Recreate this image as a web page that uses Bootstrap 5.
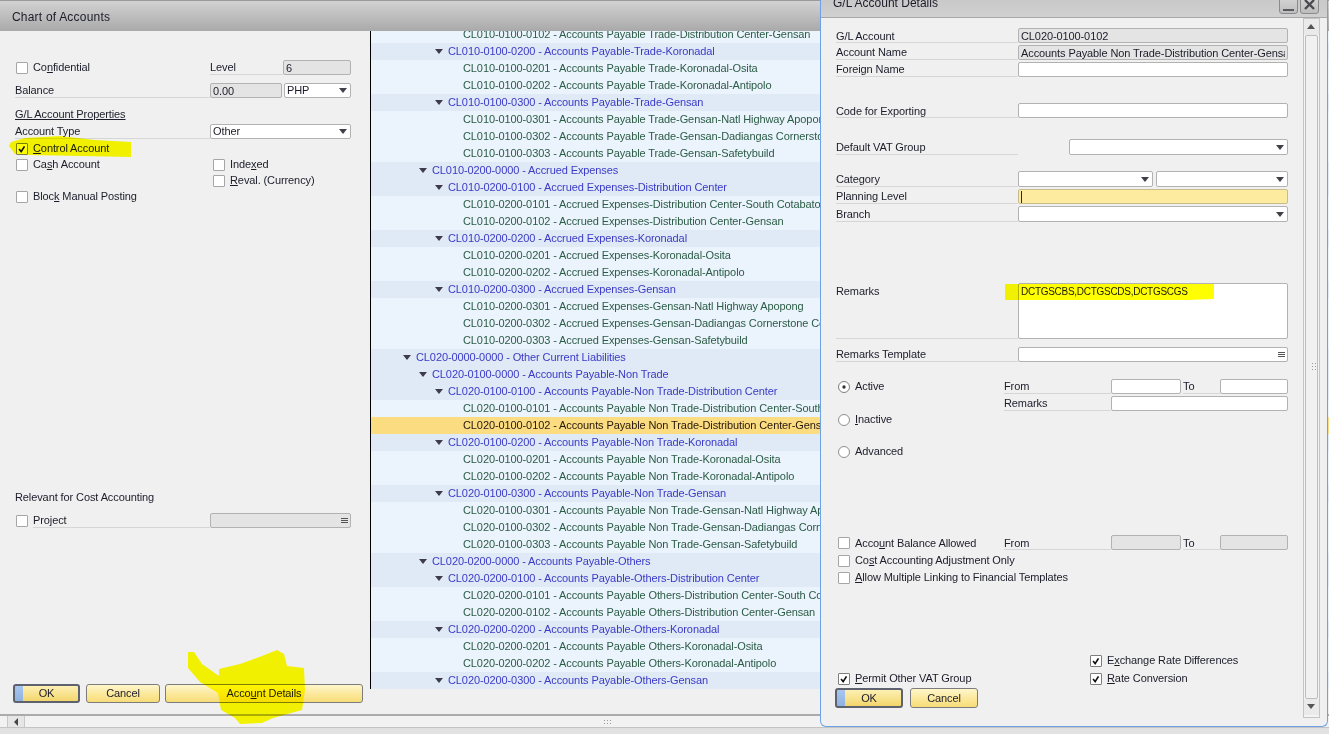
<!DOCTYPE html>
<html lang="en">
<head>
    <title>Chart of Accounts</title>
    <meta charset="UTF-8">
    <meta name="viewport" content="width=device-width, initial-scale=1.0">
    <link href="https://cdn.jsdelivr.net/npm/bootstrap@5.3.3/dist/css/bootstrap.min.css" rel="stylesheet">
    <style>
        html, body { height: 734px; overflow: hidden; }
        body { background: #e2e2e2; font: 11px/15px "Liberation Sans", Arial, sans-serif; letter-spacing: -0.1px; color: #1c1c2a; }

        /* windows */
        .win-back { position: absolute; left: 0; top: 0; width: 1329px; height: 728px; background: #f0f0f0; }
        .win-front { position: absolute; left: 820px; top: -12px; width: 508px; height: 739px; background: #f0f0f0; border: 1px solid #6ea2e6; border-top: 0; border-radius: 0 0 6px 6px; }
        .title-back { height: 31px; padding: 2px 0 0 12px; font-size: 12px; letter-spacing: 0.2px; background: linear-gradient(#d2d2d2, #a9a9a9); border-top: 1px solid #9a9a9a; }
        .title-front { height: 30px; padding: 2px 0 0 12px; font-size: 12px; letter-spacing: 0; background: linear-gradient(#c4c4c4, #d0d0d0); border-bottom: 1px solid #a8a8a8; }
        .win-btn { width: 19px; height: 22px; margin-top: -1px; border: 1px solid #8b8b8b; border-radius: 3px; background: linear-gradient(#dcdcdc, #bdbdbd); }
        .win-btn svg { display: block; }
        .win-btn-min { margin-right: 2px; }
        .win-btn-close { margin-right: 8px; }

        /* left pane */
        .pane-left { width: 370px; height: 683px; padding: 29px 0 0 15px; flex: none; }
        .form-line { display: flex; align-items: center; height: 15px; }
        .form-line-16 { height: 16px; }
        .form-line-16 .lbl { height: 16px; padding-top: 1px; }
        .lbl { height: 15px; border-bottom: 1px solid #d6d6d6; white-space: nowrap; }
        .lbl-low { padding-top: 1px; }
        .w-73 { width: 73px; flex: none; } .w-195 { width: 195px; flex: none; } .w-182 { width: 182px; flex: none; } .w-107 { width: 107px; flex: none; }
        .w-37 { width: 37px; margin-left: 2px; flex: none; }
        .spacer-195 { width: 195px; flex: none; } .spacer-197 { width: 197px; flex: none; } .spacer-168 { width: 168px; flex: none; } .spacer-252 { width: 252px; flex: none; }
        .chk-text { margin-left: 5px; white-space: nowrap; }

        /* SBO controls */
        .sbo .form-control, .sbo .form-select { height: 15px; min-height: 0; padding: 0 2px; font-size: 11px; line-height: 13px; letter-spacing: -0.1px; color: #1c1c2a; border: 1px solid #b2b2b2; border-radius: 2px; box-shadow: none; font-family: inherit; }
        .sbo .form-line-16 .form-select { height: 16px; }
        .sbo .form-select { background-color: #fff; background-position: right 3px center; background-size: 8px 5px; background-image: url("data:image/svg+xml,%3csvg xmlns='http://www.w3.org/2000/svg' viewBox='0 0 8 5'%3e%3cpath fill='%23404048' d='M0 0h8L4 5z'/%3e%3c/svg%3e"); }
        .sbo .form-control:disabled, .sbo .form-control[readonly] { background: #e4e4e4; }
        .sbo textarea.form-control { height: 56px; padding: 1px 2px; resize: none; font-size: 10px; letter-spacing: -0.28px; }
        .sbo .form-check-input { width: 12px; height: 12px; margin: 0 0 0 1px; flex: none; border: 1px solid #a6a6a6; border-radius: 1px; background-color: #fff; box-shadow: none; float: none; }
        .sbo .pane-right .form-check-input { margin-left: 2px; }
        .sbo .form-check-input[type=radio] { border-radius: 50%; border-color: #8f8f8f; }
        .sbo .form-check-input:checked { background-color: #fff; border-color: #7e7e7e; }
        .sbo .form-check-input:checked[type=checkbox] { --bs-form-check-bg-image: url("data:image/svg+xml,%3csvg xmlns='http://www.w3.org/2000/svg' viewBox='0 0 12 12'%3e%3cpath fill='none' stroke='%23101010' stroke-width='2' d='M2.5 6l2.5 3.2 4-6.4'/%3e%3c/svg%3e"); }
        .sbo .form-check-input:checked[type=radio] { --bs-form-check-bg-image: url("data:image/svg+xml,%3csvg xmlns='http://www.w3.org/2000/svg' viewBox='0 0 12 12'%3e%3ccircle cx='6' cy='6' r='2' fill='%23303038'/%3e%3c/svg%3e"); }
        .input-level { width: 68px; flex: none; } .input-bal { width: 72px; flex: none; } .input-cur { width: 67px; flex: none; margin-left: 2px; }
        .input-type { width: 141px; flex: none; } .input-proj { width: 141px; height: 15px; flex: none; }
        .input-main { width: 270px; flex: none; } .input-vat { width: 219px; margin-left: 51px; flex: none; }
        .input-cat1 { width: 135px; flex: none; } .input-cat2 { width: 132px; margin-left: 3px; flex: none; }
        .input-from { width: 70px; flex: none; } .input-to { width: 68px; flex: none; } .input-rem { width: 177px; flex: none; }
        .sbo .input-focus { background: linear-gradient(#14246a, #14246a) 2px 1px / 1px 12px no-repeat, #fdeba0; border-color: #c9bc8c; }
        .with-list { position: relative; }
        .list-mark { position: absolute; right: 3px; top: 5px; width: 7px; height: 5px; border-top: 1px solid #555; border-bottom: 1px solid #555; }
        .list-mark::after { content: ""; display: block; margin-top: 1px; border-top: 1px solid #555; }

        /* buttons */
        .sbo-btn { height: 19px; padding: 0; font-size: 11px; line-height: 15px; letter-spacing: -0.1px; color: #1c1c2a; border: 1px solid #7c7c7c; border-radius: 3px; background: linear-gradient(#fff6cc, #fbe899 55%, #f7dc78); }
        .sbo-btn-ok { border: 2px solid #5d626e; background: linear-gradient(#a8c6ee, #8fb2e2) 0 0 / 8px 100% no-repeat, linear-gradient(#fdf0b4, #f3d66c); }
        .btn-row-left { margin-left: -2px; }
        .btn-ok-l { width: 67px; } .btn-cancel-l { width: 74px; margin-left: 6px; } .btn-details { width: 198px; margin-left: 5px; }
        .btn-ok-r { width: 68px; height: 20px; margin-left: -1px; } .btn-cancel-r { width: 68px; height: 20px; margin-left: 7px; }

        /* tree */
        .tree-wrap { width: 959px; height: 658px; flex: none; overflow: hidden; border-left: 1px solid #000; }
        .tree-inner { margin-top: -5px; }
        .tree-line { height: 17px; line-height: 16px; white-space: nowrap; position: relative; }
        .tree-node { background: #e0eaf6; color: #3a3ac6; }
        .tree-leaf { background: #ebf3fc; color: #2c5c46; padding-left: 92px; }
        .tree-sel { background: #fbdc80; color: #26180c; }
        .lvl-1 { padding-left: 45px; } .lvl-2 { padding-left: 61px; } .lvl-3 { padding-left: 77px; }
        .tree-node::before { content: ""; position: absolute; top: 6px; border: 4px solid transparent; border-top: 5px solid #3c3c4a; border-bottom: 0; }
        .lvl-1::before { left: 32px; } .lvl-2::before { left: 48px; } .lvl-3::before { left: 64px; }

        /* scrollbars */
        .hbar { height: 14px; border-top: 2px solid #ababab; border-bottom: 1px solid #c4c4c4; position: relative; background: #f2f2f2; }
        .hbar-btn { position: absolute; left: 7px; top: 0; width: 18px; height: 11px; background: #e6e6e6; border-right: 1px solid #c8c8c8; border-left: 1px solid #c8c8c8; }
        .hbar-btn::after { content: ""; position: absolute; left: 6px; top: 2px; border: 4px solid transparent; border-right: 4px solid #444; border-left: 0; }
        .grip { position: absolute; width: 8px; height: 5px; background: radial-gradient(circle, #999 0.8px, transparent 1px) 0 0 / 3px 3px; }
        .grip-h { left: 603px; top: 3px; } .grip-v { left: 5px; top: 50%; margin-top: -5px; width: 6px; height: 9px; }
        .vbar { position: absolute; left: 482px; top: 30px; width: 17px; height: 700px; border: 1px solid #c4c4c4; background: #f4f4f4; }
        .vbar-up, .vbar-down { height: 16px; position: relative; background: #eaeaea; }
        .vbar-up::after, .vbar-down::after { content: ""; position: absolute; left: 3px; top: 5px; border: 4px solid transparent; }
        .vbar-up::after { border-bottom: 5px solid #555; border-top: 0; }
        .vbar-down::after { border-top: 5px solid #555; border-bottom: 0; }
        .vbar-thumb { height: 664px; position: relative; margin: 0 1px; border: 1px solid #bdbdbd; border-radius: 2px; background: #f1f1f1; }

        /* spacing of the form rows */
        .pane-right { padding: 10px 0 0 15px; }
        .gap-1x { margin-top: 1px; } .gap-2x { margin-top: 2px; } .gap-3x { margin-top: 3px; } .gap-8 { margin-top: 8px; } .gap-9 { margin-top: 9px; }
        .gap-16 { margin-top: 16px; } .gap-17 { margin-top: 17px; } .gap-21 { margin-top: 21px; } .gap-26 { margin-top: 26px; } .gap-61 { margin-top: 61px; }
        .gap-68 { margin-top: 68px; } .gap-76 { margin-top: 76px; } .gap-156 { margin-top: 156px; } .gap-286 { margin-top: 286px; }
        .line-tall { height: 56px; align-items: flex-start; }
        .line-tall .lbl { height: 56px; }
        .remarks-lbl-text { display: block; margin-top: 1px; }

        /* marker strokes on top of the screenshot */
        .marker { position: absolute; left: 0; top: 0; width: 1329px; height: 734px; pointer-events: none; mix-blend-mode: multiply; }
    </style>
</head>
<body class="sbo">
    <div class="win-back d-flex flex-column">
        <div class="title-back d-flex align-items-center">Chart of Accounts</div>
        <div class="d-flex">
            <div class="pane-left">
                <div class="form-line">
                    <span class="spacer-195 d-flex align-items-center"><input class="form-check-input" type="checkbox"><span class="chk-text">Co<u>n</u>fidential</span></span>
                    <span class="lbl w-73">Level</span>
                    <input class="form-control input-level" value="6" disabled>
                </div>
                <div class="form-line gap-8">
                    <span class="lbl w-195">Balance</span>
                    <input class="form-control input-bal" value="0.00" disabled>
                    <select class="form-select input-cur"><option>PHP</option></select>
                </div>
                <div class="form-line gap-9"><u>G/L Account Properties</u></div>
                <div class="form-line gap-2x">
                    <span class="lbl w-195">Account Type</span>
                    <select class="form-select input-type"><option>Other</option></select>
                </div>
                <div class="form-line gap-2x">
                    <input class="form-check-input" type="checkbox" checked><span class="chk-text"><u>C</u>ontrol Account</span>
                </div>
                <div class="form-line gap-1x">
                    <span class="spacer-197 d-flex align-items-center"><input class="form-check-input" type="checkbox"><span class="chk-text">Ca<u>s</u>h Account</span></span>
                    <input class="form-check-input" type="checkbox"><span class="chk-text">Inde<u>x</u>ed</span>
                </div>
                <div class="form-line gap-1x">
                    <span class="spacer-197"></span>
                    <input class="form-check-input" type="checkbox"><span class="chk-text"><u>R</u>eval. (Currency)</span>
                </div>
                <div class="form-line gap-1x">
                    <input class="form-check-input" type="checkbox"><span class="chk-text">Bloc<u>k</u> Manual Posting</span>
                </div>
                <div class="form-line gap-286">Relevant for Cost Accounting</div>
                <div class="form-line gap-8">
                    <span class="spacer-195 d-flex align-items-center"><input class="form-check-input" type="checkbox"><span class="chk-text lbl flex-grow-1">Pro<u>j</u>ect</span></span>
                    <span class="with-list input-proj"><input class="form-control" disabled><span class="list-mark"></span></span>
                </div>
                <div class="d-flex gap-156 btn-row-left">
                    <button class="btn sbo-btn sbo-btn-ok btn-ok-l">OK</button>
                    <button class="btn sbo-btn btn-cancel-l">Cancel</button>
                    <button class="btn sbo-btn btn-details">Acco<u>u</u>nt Details</button>
                </div>
            </div>
            <div class="tree-wrap">
                <div class="tree-inner">
                    <div class="tree-line tree-leaf">CL010-0100-0102 - Accounts Payable Trade-Distribution Center-Gensan</div>
                    <div class="tree-line tree-node lvl-3">CL010-0100-0200 - Accounts Payable-Trade-Koronadal</div>
                    <div class="tree-line tree-leaf">CL010-0100-0201 - Accounts Payable Trade-Koronadal-Osita</div>
                    <div class="tree-line tree-leaf">CL010-0100-0202 - Accounts Payable Trade-Koronadal-Antipolo</div>
                    <div class="tree-line tree-node lvl-3">CL010-0100-0300 - Accounts Payable-Trade-Gensan</div>
                    <div class="tree-line tree-leaf">CL010-0100-0301 - Accounts Payable Trade-Gensan-Natl Highway Apopong</div>
                    <div class="tree-line tree-leaf">CL010-0100-0302 - Accounts Payable Trade-Gensan-Dadiangas Cornerstone</div>
                    <div class="tree-line tree-leaf">CL010-0100-0303 - Accounts Payable Trade-Gensan-Safetybuild</div>
                    <div class="tree-line tree-node lvl-2">CL010-0200-0000 - Accrued Expenses</div>
                    <div class="tree-line tree-node lvl-3">CL010-0200-0100 - Accrued Expenses-Distribution Center</div>
                    <div class="tree-line tree-leaf">CL010-0200-0101 - Accrued Expenses-Distribution Center-South Cotabato</div>
                    <div class="tree-line tree-leaf">CL010-0200-0102 - Accrued Expenses-Distribution Center-Gensan</div>
                    <div class="tree-line tree-node lvl-3">CL010-0200-0200 - Accrued Expenses-Koronadal</div>
                    <div class="tree-line tree-leaf">CL010-0200-0201 - Accrued Expenses-Koronadal-Osita</div>
                    <div class="tree-line tree-leaf">CL010-0200-0202 - Accrued Expenses-Koronadal-Antipolo</div>
                    <div class="tree-line tree-node lvl-3">CL010-0200-0300 - Accrued Expenses-Gensan</div>
                    <div class="tree-line tree-leaf">CL010-0200-0301 - Accrued Expenses-Gensan-Natl Highway Apopong</div>
                    <div class="tree-line tree-leaf">CL010-0200-0302 - Accrued Expenses-Gensan-Dadiangas Cornerstone Center</div>
                    <div class="tree-line tree-leaf">CL010-0200-0303 - Accrued Expenses-Gensan-Safetybuild</div>
                    <div class="tree-line tree-node lvl-1">CL020-0000-0000 - Other Current Liabilities</div>
                    <div class="tree-line tree-node lvl-2">CL020-0100-0000 - Accounts Payable-Non Trade</div>
                    <div class="tree-line tree-node lvl-3">CL020-0100-0100 - Accounts Payable-Non Trade-Distribution Center</div>
                    <div class="tree-line tree-leaf">CL020-0100-0101 - Accounts Payable Non Trade-Distribution Center-South Cotabato</div>
                    <div class="tree-line tree-leaf tree-sel">CL020-0100-0102 - Accounts Payable Non Trade-Distribution Center-Gensan</div>
                    <div class="tree-line tree-node lvl-3">CL020-0100-0200 - Accounts Payable-Non Trade-Koronadal</div>
                    <div class="tree-line tree-leaf">CL020-0100-0201 - Accounts Payable Non Trade-Koronadal-Osita</div>
                    <div class="tree-line tree-leaf">CL020-0100-0202 - Accounts Payable Non Trade-Koronadal-Antipolo</div>
                    <div class="tree-line tree-node lvl-3">CL020-0100-0300 - Accounts Payable-Non Trade-Gensan</div>
                    <div class="tree-line tree-leaf">CL020-0100-0301 - Accounts Payable Non Trade-Gensan-Natl Highway Apopong</div>
                    <div class="tree-line tree-leaf">CL020-0100-0302 - Accounts Payable Non Trade-Gensan-Dadiangas Cornerstone</div>
                    <div class="tree-line tree-leaf">CL020-0100-0303 - Accounts Payable Non Trade-Gensan-Safetybuild</div>
                    <div class="tree-line tree-node lvl-2">CL020-0200-0000 - Accounts Payable-Others</div>
                    <div class="tree-line tree-node lvl-3">CL020-0200-0100 - Accounts Payable-Others-Distribution Center</div>
                    <div class="tree-line tree-leaf">CL020-0200-0101 - Accounts Payable Others-Distribution Center-South Cotabato</div>
                    <div class="tree-line tree-leaf">CL020-0200-0102 - Accounts Payable Others-Distribution Center-Gensan</div>
                    <div class="tree-line tree-node lvl-3">CL020-0200-0200 - Accounts Payable-Others-Koronadal</div>
                    <div class="tree-line tree-leaf">CL020-0200-0201 - Accounts Payable Others-Koronadal-Osita</div>
                    <div class="tree-line tree-leaf">CL020-0200-0202 - Accounts Payable Others-Koronadal-Antipolo</div>
                    <div class="tree-line tree-node lvl-3">CL020-0200-0300 - Accounts Payable-Others-Gensan</div>
                </div>
            </div>
        </div>
        <div class="hbar"><span class="hbar-btn"></span><span class="grip grip-h"></span></div>
    </div>

    <div class="win-front">
        <div class="title-front d-flex align-items-center">
            <span>G/L Account Details</span>
            <span class="win-btn win-btn-min ms-auto"><svg width="17" height="20" viewBox="0 0 17 20"><path fill="#5a5a5e" d="M3 16h11v2H3z"/></svg></span>
            <span class="win-btn win-btn-close"><svg width="17" height="20" viewBox="0 0 17 20"><path fill="none" stroke="#4a4a50" stroke-width="2.4" d="M4 7l9 9M13 7l-9 9"/></svg></span>
        </div>
        <div class="pane-right">
            <div class="form-line"><span class="lbl lbl-low w-182">G/L Account</span><input class="form-control input-main" value="CL020-0100-0102" readonly></div>
            <div class="form-line gap-2x"><span class="lbl w-182">Account Name</span><input class="form-control input-main" value="Accounts Payable Non Trade-Distribution Center-Gensan" readonly></div>
            <div class="form-line gap-2x"><span class="lbl w-182">Foreign Name</span><input class="form-control input-main"></div>
            <div class="form-line gap-26"><span class="lbl lbl-low w-182">Code for Exporting</span><input class="form-control input-main"></div>
            <div class="form-line form-line-16 gap-21"><span class="lbl w-182">Default VAT Group</span><select class="form-select input-vat"></select></div>
            <div class="form-line form-line-16 gap-16"><span class="lbl w-182">Category</span><select class="form-select input-cat1"></select><select class="form-select input-cat2"></select></div>
            <div class="form-line gap-2x"><span class="lbl w-182">Planning Level</span><input class="form-control input-main input-focus"></div>
            <div class="form-line form-line-16 gap-2x"><span class="lbl w-182">Branch</span><select class="form-select input-main"></select></div>
            <div class="form-line line-tall gap-61"><span class="lbl w-182"><span class="remarks-lbl-text">Remarks</span></span><textarea class="form-control input-main">DCTGSCBS,DCTGSCDS,DCTGSCGS</textarea></div>
            <div class="form-line gap-8"><span class="lbl w-182">Remarks Template</span><span class="with-list input-main"><input class="form-control"><span class="list-mark"></span></span></div>
            <div class="form-line gap-17">
                <span class="spacer-168 d-flex align-items-center"><input class="form-check-input" type="radio" name="st" checked><span class="chk-text">Active</span></span>
                <span class="lbl w-107">From</span><input class="form-control input-from"><span class="lbl w-37">To</span><input class="form-control input-to">
            </div>
            <div class="form-line gap-2x"><span class="spacer-168"></span><span class="lbl w-107">Remarks</span><input class="form-control input-rem"></div>
            <div class="form-line gap-1x"><input class="form-check-input" type="radio" name="st"><span class="chk-text"><u>I</u>nactive</span></div>
            <div class="form-line gap-17"><input class="form-check-input" type="radio" name="st"><span class="chk-text">Advanced</span></div>
            <div class="form-line gap-76">
                <span class="spacer-168 d-flex align-items-center"><input class="form-check-input" type="checkbox"><span class="chk-text lbl-low">Acco<u>u</u>nt Balance Allowed</span></span>
                <span class="lbl lbl-low w-107">From</span><input class="form-control input-from" disabled><span class="lbl lbl-low w-37">To</span><input class="form-control input-to" disabled>
            </div>
            <div class="form-line gap-3x"><input class="form-check-input" type="checkbox"><span class="chk-text">Co<u>s</u>t Accounting Adjustment Only</span></div>
            <div class="form-line gap-2x"><input class="form-check-input" type="checkbox"><span class="chk-text"><u>A</u>llow Multiple Linking to Financial Templates</span></div>
            <div class="form-line gap-68"><span class="spacer-252"></span><input class="form-check-input" type="checkbox" checked><span class="chk-text">E<u>x</u>change Rate Differences</span></div>
            <div class="form-line gap-3x">
                <span class="spacer-252 d-flex align-items-center"><input class="form-check-input" type="checkbox" checked><span class="chk-text"><u>P</u>ermit Other VAT Group</span></span>
                <input class="form-check-input" type="checkbox" checked><span class="chk-text"><u>R</u>ate Conversion</span>
            </div>
            <div class="d-flex gap-2x">
                <button class="btn sbo-btn sbo-btn-ok btn-ok-r">OK</button>
                <button class="btn sbo-btn btn-cancel-r">Cancel</button>
            </div>
        </div>
        <div class="vbar">
            <div class="vbar-up"></div>
            <div class="vbar-thumb"><span class="grip grip-v"></span></div>
            <div class="vbar-down"></div>
        </div>
    </div>

    <svg class="marker" viewBox="0 0 1329 734">
        <path fill="#ffff00" d="M9 146L11 142L25 138L60 136L95 140L131 142L131 157L30 155L15 154Z"/>
        <path fill="#ffff00" d="M188 652L194 652L202 664L219 676L219 669L240 664L262 656L277 650L284 654L287 666L304 668L305 690L302 710L273 718L262 723L240 724L235 718L221 710L218 693L200 682L188 668Z"/>
        <path fill="#ffff00" d="M1005 284L1214 284L1214 299L1187 300L1005 300Z"/>
    </svg>

    <script src="https://cdn.jsdelivr.net/npm/bootstrap@5.3.3/dist/js/bootstrap.bundle.min.js"></script>
</body>
</html>
